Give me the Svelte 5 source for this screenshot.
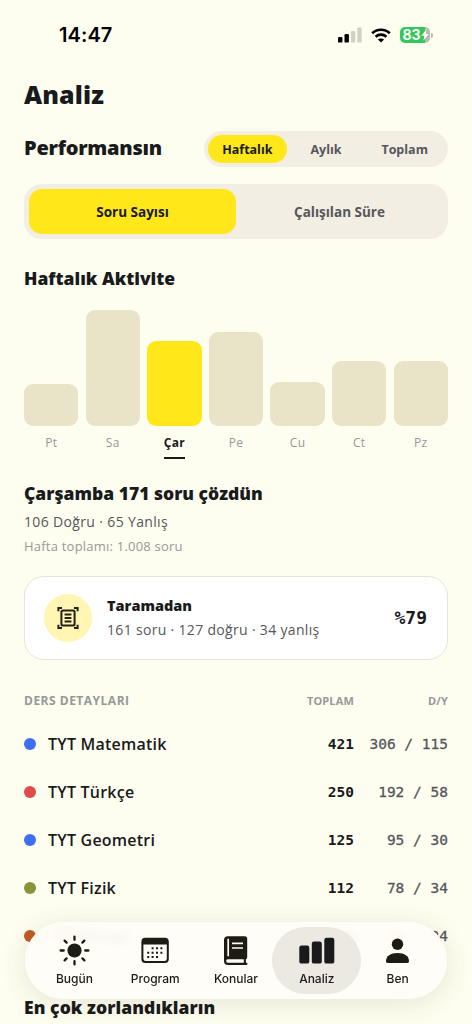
<script lang="ts">
  const periods = ['Haftalık', 'Aylık', 'Toplam'];
  const metrics = ['Soru Sayısı', 'Çalışılan Süre'];
  let period = $state('Haftalık');
  let metric = $state('Soru Sayısı');
  let day = $state('Çar');
  let tab = $state('Analiz');

  const days = [
    { label: 'Pt', height: 41.5 },
    { label: 'Sa', height: 115.5 },
    { label: 'Çar', height: 84.5 },
    { label: 'Pe', height: 93.5 },
    { label: 'Cu', height: 43.5 },
    { label: 'Ct', height: 64.5 },
    { label: 'Pz', height: 64.5 },
  ];

  const lessons = [
    { name: 'TYT Matematik', color: '#3b6ff5', total: 421, right: 306, wrong: 115 },
    { name: 'TYT Türkçe', color: '#e04a4c', total: 250, right: 192, wrong: 58 },
    { name: 'TYT Geometri', color: '#3b6ff5', total: 125, right: 95, wrong: 30 },
    { name: 'TYT Fizik', color: '#8a923a', total: 112, right: 78, wrong: 34 },
    { name: 'TYT Kimya', color: '#c05a28', total: 100, right: 76, wrong: 24 },
  ];

  const tabs = ['Bugün', 'Program', 'Konular', 'Analiz', 'Ben'];
</script>

<div class="screen">
  <div class="statusbar">
    <span class="time">14:47</span>
    <div class="indicators">
      <svg class="signal" width="24" height="16" viewBox="0 0 24 16">
        <rect x="0" y="10" width="4.4" height="5.6" rx="1.2" />
        <rect x="6.5" y="7" width="4.4" height="8.6" rx="1.2" />
        <rect class="off" x="12.9" y="4" width="4.4" height="11.6" rx="1.2" />
        <rect class="off" x="19.3" y=".6" width="4.4" height="15" rx="1.2" />
      </svg>
      <svg class="wifi" width="20" height="15" viewBox="0 0 20 15">
        <path d="M1.2 5.2C6 .6 14 .6 18.8 5.2" />
        <path d="M4.6 8.7C7.6 5.9 12.4 5.9 15.4 8.7" />
        <path class="tip" d="M10 14.6 6.9 11.6C8.5 10 11.5 10 13.1 11.6Z" />
      </svg>
      <div class="battery">
        <span>83</span>
        <svg width="8" height="12" viewBox="0 0 8 12"><path d="M5.5.3.4 6.8h3L2.4 11.7 7.6 5h-3z" /></svg>
      </div>
    </div>
  </div>

  <main>
    <h1>Analiz</h1>

    <div class="performance">
      <h2>Performansın</h2>
      <div class="periods">
        {#each periods as p}
          <button class:active={period === p} onclick={() => period = p}>{p}</button>
        {/each}
      </div>
    </div>

    <div class="metrics">
      {#each metrics as m}
        <button class:active={metric === m} onclick={() => metric = m}>{m}</button>
      {/each}
    </div>

    <h3 class="charttitle">Haftalık Aktivite</h3>
    <div class="chart">
      {#each days as d}
        <button class="day" class:active={day === d.label} onclick={() => day = d.label}>
          <div class="bar" style="height: {d.height}px"></div>
          <span>{d.label}</span>
        </button>
      {/each}
    </div>

    <div class="summary">
      <h3>Çarşamba 171 soru çözdün</h3>
      <p>106 Doğru · 65 Yanlış</p>
      <p class="weektotal">Hafta toplamı: 1.008 soru</p>
    </div>

    <div class="scan">
      <div class="scanicon">
        <svg width="22" height="24" viewBox="0 0 22 24">
          <path d="M1.4 5.2V1.9H5M17 1.9h3.6v3.3M20.6 18.8v3.3H17M5 22.1H1.4v-3.3" />
          <rect x="4.4" y="4.4" width="13.2" height="15.2" rx="1.6" />
          <path d="M7.6 8.6h6.8M7.6 12h6.8M7.6 15.4h6.8" />
        </svg>
      </div>
      <div class="scantext">
        <strong>Taramadan</strong>
        <span>161 soru · 127 doğru · 34 yanlış</span>
      </div>
      <div class="percent">%79</div>
    </div>

    <div class="lessonheader">
      <span class="title">DERS DETAYLARI</span>
      <span class="total">TOPLAM</span>
      <span class="ratio">D/Y</span>
    </div>
    {#each lessons as l}
      <div class="lesson">
        <i style="background: {l.color}"></i>
        <span class="name">{l.name}</span>
        <span class="total">{l.total}</span>
        <span class="ratio">{l.right} / {l.wrong}</span>
      </div>
    {/each}

    <h3 class="hardest">En çok zorlandıkların</h3>
  </main>

  <nav>
    {#each tabs as t}
      <button class:active={tab === t} onclick={() => tab = t}>
        <svg width="36" height="32" viewBox="0 0 36 32">
          {#if t === 'Bugün'}
            <circle cx="18.5" cy="16.5" r="7.1" />
            <path class="line" d="M18.5 2.6v3.2M18.5 27.2v3.2M4.6 16.5h3.2M29.2 16.5h3.2M8.6 6.6l2 2M26.4 24.4l2 2M28.4 6.6l-2 2M10.6 24.4l-2 2" />
          {:else if t === 'Program'}
            <path fill-rule="evenodd" d="M8.4 3.7h19.4a4 4 0 0 1 4 4v17.4a4 4 0 0 1-4 4H8.4a4 4 0 0 1-4-4V7.7a4 4 0 0 1 4-4ZM6.4 10.5v14.2a2.3 2.3 0 0 0 2.3 2.3h18.8a2.3 2.3 0 0 0 2.3-2.3V10.5Z" />
            <path class="dots" d="M14.6 14.2h12M10.2 18.7h16.4M10.2 23.1h12" />
          {:else if t === 'Konular'}
            <path fill-rule="evenodd" d="M9.8 2.2h16.9a2.5 2.5 0 0 1 2.5 2.5v18.8a2 2 0 0 1-1.3 1.8v3.4h.5a1.1 1.1 0 0 1 0 2.3H10a4 4 0 0 1-4-4V6a3.8 3.8 0 0 1 3.8-3.8ZM9.8 25.3a1.7 1.7 0 0 0 0 3.4h16v-3.4Z" />
            <path class="cut" d="M10.2 4.7v17.5M14 9.4h11M14 14h11" />
          {:else if t === 'Analiz'}
            <rect x=".3" y="11.6" width="10" height="18" rx="2.2" />
            <rect x="12.8" y="7.6" width="10" height="22" rx="2.2" />
            <rect x="25.3" y="3.8" width="10" height="25.8" rx="2.2" />
          {:else}
            <circle cx="17.5" cy="10.2" r="5.7" />
            <path d="M6 27.2C6 21.9 10.5 18.9 17.5 18.9S29 21.9 29 27.2c0 1.2-.5 1.7-1.8 1.7H7.8c-1.3 0-1.8-.5-1.8-1.7Z" />
          {/if}
        </svg>
        <span>{t}</span>
      </button>
    {/each}
  </nav>
</div>

<style>
  :global(body) {
    background: #fefef0;
  }
  .screen {
    position: relative;
    box-sizing: border-box;
    width: 472px;
    height: 1024px;
    overflow: hidden;
    background: #fefef0;
    color: #191a1c;
    font-family: "Open Sans", "Noto Sans", sans-serif;
  }
  button {
    border: 0;
    padding: 0;
    background: none;
    color: inherit;
    font: inherit;
  }
  h1, h2, h3, p {
    margin: 0;
    white-space: nowrap;
  }
  h1, h2, h3, strong {
    font-weight: 800;
  }

  .statusbar {
    display: flex;
    justify-content: space-between;
    align-items: center;
    height: 70px;
    padding: 0 42px 0 59px;
    color: #000;
  }
  .time {
    font: 600 20px/24px Inter, sans-serif;
    letter-spacing: .1px;
  }
  .indicators {
    display: flex;
    align-items: center;
    gap: 9px;
  }
  .signal .off {
    fill: #d1d1c6;
  }
  .wifi path {
    fill: none;
    stroke: #000;
    stroke-width: 2.6;
  }
  .wifi .tip {
    fill: #000;
    stroke: none;
  }
  .battery {
    position: relative;
    display: flex;
    align-items: center;
    box-sizing: border-box;
    width: 30px;
    height: 16.5px;
    padding-left: 2.5px;
    border-radius: 5px;
    background: linear-gradient(90deg, #34c759 25px, #b9bab0 25px);
    color: #fff;
    font: 700 14px/16px Inter, sans-serif;

    & svg {
      fill: #fff;
    }
    &::after {
      content: "";
      position: absolute;
      left: 31px;
      top: 6px;
      width: 2px;
      height: 5px;
      border-radius: 0 2px 2px 0;
      background: #b9bab0;
    }
  }

  main {
    padding: 0 24px;
  }
  h1 {
    padding-top: 8px;
    font-size: 25px;
    line-height: 32px;
    letter-spacing: .1px;
  }
  .performance {
    display: flex;
    justify-content: space-between;
    align-items: center;
    height: 36px;
    margin-top: 21px;
  }
  h2 {
    padding-bottom: 3px;
    font-size: 20px;
    letter-spacing: -.25px;
  }
  .periods {
    display: grid;
    grid-template-columns: repeat(3, 1fr);
    box-sizing: border-box;
    width: 244px;
    height: 36px;
    padding: 4px;
    border-radius: 18px;
    background: #f3eee3;
    font-size: 12.5px;
    font-weight: 700;
    color: #55575b;

    & button {
      border-radius: 14px;
    }
    & .active {
      background: #ffe71a;
      color: #191a1c;
    }
  }
  .metrics {
    display: grid;
    grid-template-columns: 1fr 1fr;
    box-sizing: border-box;
    height: 55px;
    margin-top: 17px;
    padding: 5px;
    border-radius: 18px;
    background: #f3eee3;
    font-size: 13.5px;
    font-weight: 700;
    color: #55575b;

    & button {
      border-radius: 13px;
    }
    & .active {
      background: #ffe71a;
      color: #191a1c;
    }
  }
  h3 {
    font-size: 17.5px;
    line-height: 24px;
  }
  .charttitle {
    margin-top: 27px;
  }
  .chart {
    display: grid;
    grid-template-columns: repeat(7, 1fr);
    gap: 7.2px;
    align-items: end;
    margin-top: 20px;
  }
  .day {
    display: flex;
    flex-direction: column;
    align-items: center;
    font-size: 12px;
    line-height: 16px;
    letter-spacing: .3px;
    color: #97989a;

    & .bar {
      align-self: stretch;
      border-radius: 9px;
      background: #e9e3c8;
    }
    & span {
      margin-top: 9.5px;
      padding-bottom: 6px;
      border-bottom: 2px solid transparent;
    }
    &.active {
      color: #191a1c;
      font-weight: 700;
    }
    &.active .bar {
      background: #ffe71a;
    }
    &.active span {
      border-color: #191a1c;
    }
  }
  .summary {
    margin-top: 22px;
    font-size: 14px;
    line-height: 24px;
    letter-spacing: .35px;
    color: #55575b;

    & h3 {
      letter-spacing: 0;
      color: #191a1c;
    }
    & p {
      margin-top: 5px;
    }
    & .weektotal {
      margin-top: 0;
      font-size: 13px;
      letter-spacing: .22px;
      color: #97989a;
    }
  }
  .scan {
    display: flex;
    align-items: center;
    box-sizing: border-box;
    height: 84px;
    margin-top: 18px;
    padding: 0 20px 0 19px;
    border: 1px solid #e6e4da;
    border-radius: 20px;
    background: #fff;
  }
  .scanicon {
    display: flex;
    align-items: center;
    justify-content: center;
    width: 48px;
    height: 48px;
    border-radius: 50%;
    background: #fff6b3;

    & svg {
      fill: none;
      stroke: #22200f;
      stroke-width: 2;
    }
  }
  .scantext {
    display: flex;
    flex: 1;
    flex-direction: column;
    margin-left: 15px;
    font-size: 14px;
    line-height: 24px;
    letter-spacing: .32px;
    color: #55575b;
    white-space: nowrap;

    & strong {
      font-size: 14.5px;
      letter-spacing: 0;
      color: #191a1c;
    }
  }
  .percent {
    font: 700 18px/24px "DejaVu Sans Mono", monospace;
  }
  .lessonheader, .lesson {
    display: flex;
    align-items: center;
    height: 48px;
  }
  .total {
    width: 70px;
    text-align: right;
  }
  .ratio {
    width: 94px;
    text-align: right;
  }
  .lessonheader {
    height: 24px;
    margin: 28px 0 8px;
    font-size: 11px;
    font-weight: 700;
    letter-spacing: .15px;
    color: #97989a;

    & .title {
      flex: 1;
      font-size: 12px;
      letter-spacing: .5px;
    }
  }
  .lesson {
    & i {
      width: 12px;
      height: 12px;
      border-radius: 50%;
    }
    & .name {
      flex: 1;
      margin-left: 12px;
      font-size: 16px;
      font-weight: 600;
      letter-spacing: .22px;
    }
    & .total, & .ratio {
      font: 700 14.5px/20px "DejaVu Sans Mono", monospace;
    }
    & .ratio {
      font-weight: 400;
      color: #55575b;
      -webkit-text-stroke: .3px #55575b;
    }
  }
  .hardest {
    margin-top: 35px;
    letter-spacing: .08px;
  }

  nav {
    position: absolute;
    left: 25px;
    top: 922px;
    display: grid;
    grid-template-columns: repeat(5, 1fr);
    box-sizing: border-box;
    width: 422px;
    height: 76.5px;
    padding: 5px 9px;
    border-radius: 38px;
    background: rgba(255, 253, 246, .94);
    backdrop-filter: blur(4px);
    box-shadow: 0 4px 26px rgba(70, 65, 30, .13);
    font: 500 12px/16px Inter, sans-serif;
    letter-spacing: .1px;
    color: #1d1b12;

    & button {
      display: flex;
      flex-direction: column;
      align-items: center;
      margin: 0 -4px;
      padding-top: 7px;
      border-radius: 34px;
    }
    & .active {
      background: #ebe9e1;
      color: #191a1c;
    }
    & svg {
      fill: currentColor;
    }
    & span {
      margin-top: 5px;
    }
    & .line {
      fill: none;
      stroke: currentColor;
      stroke-width: 2.3;
      stroke-linecap: round;
    }
    & .dots {
      stroke: currentColor;
      stroke-width: 2;
      stroke-dasharray: 2 2.4;
    }
    & .cut {
      fill: none;
      stroke: #fffdf6;
      stroke-width: 1.7;
    }
  }
</style>
